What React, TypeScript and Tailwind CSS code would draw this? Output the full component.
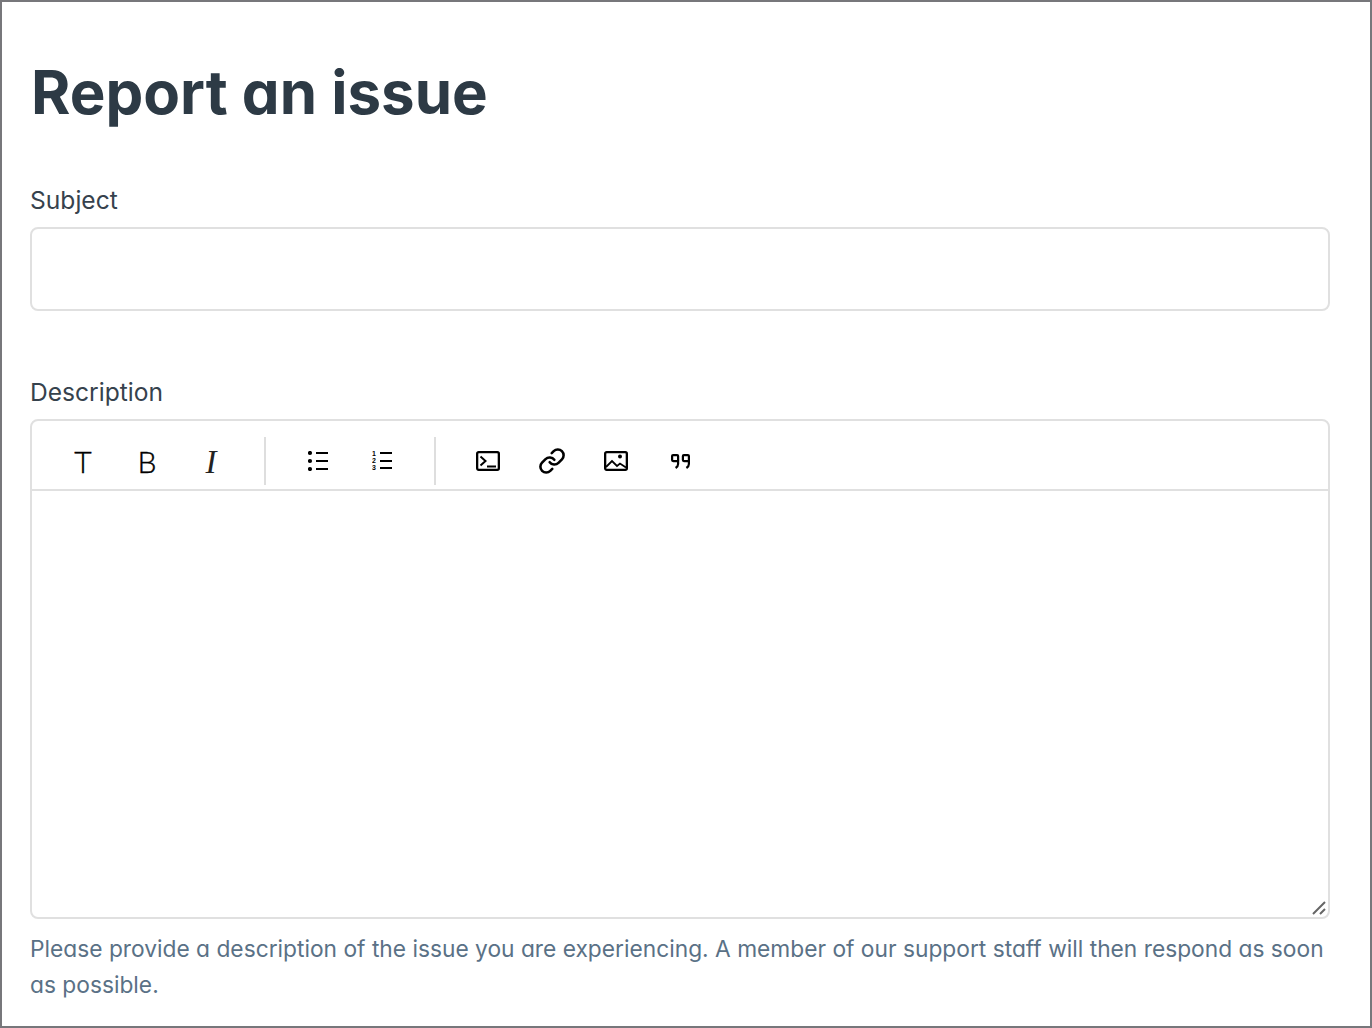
import { Link } from "lucide-react";

function Divider() {
  return <div className="mx-[20px] h-[48px] w-[2px] bg-[#dedede]" />;
}

function ToolButton({ children }: { children: React.ReactNode }) {
  return <div className="flex h-[64px] w-[64px] items-center justify-center text-black">{children}</div>;
}

function BulletIcon() {
  return (
    <svg width="20" height="20" viewBox="0 0 20 20" fill="none" stroke="#000" strokeWidth="2.200">
      <circle cx="2" cy="2" r="2.100" fill="#000" stroke="none" />
      <circle cx="2" cy="10" r="2.100" fill="#000" stroke="none" />
      <circle cx="2" cy="18" r="2.100" fill="#000" stroke="none" />
      <path d="M8 2h12M8 10h12M8 18h12" />
    </svg>
  );
}

function NumberIcon() {
  return (
    <svg width="20" height="22" viewBox="0 0 20 22" fill="#000">
      <text x="0" y="6" fontSize="7" fontWeight="700" fontFamily="Liberation Sans, sans-serif">1</text>
      <text x="0" y="13" fontSize="7" fontWeight="700" fontFamily="Liberation Sans, sans-serif">2</text>
      <text x="0" y="20" fontSize="7" fontWeight="700" fontFamily="Liberation Sans, sans-serif">3</text>
      <path d="M8 3h12M8 11h12M8 18h12" stroke="#000" strokeWidth="2.200" />
    </svg>
  );
}

function TerminalIcon() {
  return (
    <svg width="24" height="20" viewBox="0 0 24 20" fill="none" stroke="#000" strokeWidth="2.300">
      <rect x="1.150" y="1.150" width="21.700" height="17.700" rx="1.500" />
      <path d="m4.500 5.500 5 4.500-5 4.500M11 15.500h9" strokeWidth="2" />
    </svg>
  );
}

function PictureIcon() {
  return (
    <svg width="24" height="20" viewBox="0 0 24 20" fill="none" stroke="#000" strokeWidth="2.300">
      <rect x="1.150" y="1.150" width="21.700" height="17.700" rx="1.500" />
      <circle cx="16" cy="5.500" r="2" fill="#000" stroke="none" />
      <path d="m2 16 6-6 5 5 3-2.500 6 4" strokeWidth="1.800" />
    </svg>
  );
}

function QuoteIcon() {
  return (
    <svg width="19" height="15" viewBox="0 0 19 15" fill="none" stroke="#000" strokeWidth="2.200">
      <rect x="1.100" y="1.100" width="6" height="6" rx="1" />
      <path d="M7.100 6v4c0 2-1 3-2.500 4" />
      <rect x="11.900" y="1.100" width="6" height="6" rx="1" />
      <path d="M17.900 6v4c0 2-1 3-2.500 4" />
    </svg>
  );
}

export default function App() {
  return (
    <div className="h-[1028px] w-[1372px] overflow-hidden border-2 border-[#77777b] bg-white px-[28px] font-['Inter',sans-serif] [font-feature-settings:'cv11']">
      <h1 className="pt-[50px] pl-[1px] text-[60px] font-bold leading-[80px] text-[#2d3a45]">Report an issue</h1>

      <label className="mt-[50px] block text-[24.600px] leading-[36px] text-[#36424d]">Subject</label>
      <div className="mt-[9px] h-[84px] w-[1300px] rounded-[8px] border-2 border-[#e0e0e0]" />

      <label className="mt-[63px] block text-[24.600px] leading-[36px] text-[#36424d]">Description</label>
      <div className="relative mt-[9px] h-[500px] w-[1300px] rounded-[8px] border-2 border-[#e0e0e0]">
        <div className="flex h-[70px] items-center border-b-2 border-[#e0e0e0] pl-[20px] pt-[12px]">
          <ToolButton><span className="mr-[2px] font-['Lato',sans-serif] text-[30px] font-light [-webkit-text-stroke:0.4px_#000]">T</span></ToolButton>
          <ToolButton><span className="mr-[2px] font-['Lato',sans-serif] text-[30px] font-light [-webkit-text-stroke:0.4px_#000]">B</span></ToolButton>
          <ToolButton><span className="mr-[2px] mt-[3px] font-['Liberation_Serif',serif] text-[33px] italic text-[#222222]">I</span></ToolButton>
          <Divider />
          <ToolButton><BulletIcon /></ToolButton>
          <ToolButton><NumberIcon /></ToolButton>
          <Divider />
          <ToolButton><TerminalIcon /></ToolButton>
          <ToolButton><Link size={28} strokeWidth={2.200} /></ToolButton>
          <ToolButton><PictureIcon /></ToolButton>
          <ToolButton><QuoteIcon /></ToolButton>
        </div>
        <svg className="absolute bottom-[2px] right-[2px]" width="14" height="14" viewBox="0 0 14 14" stroke="#666" strokeWidth="2">
          <path d="M1 13 13 1M8 13l5-5" />
        </svg>
      </div>

      <p className="mt-[12px] text-[22.750px] leading-[36px] text-[#5a7186]">
        Please provide a description of the issue you are experiencing. A member of our support staff will then respond as soon as possible.
      </p>
    </div>
  );
}
